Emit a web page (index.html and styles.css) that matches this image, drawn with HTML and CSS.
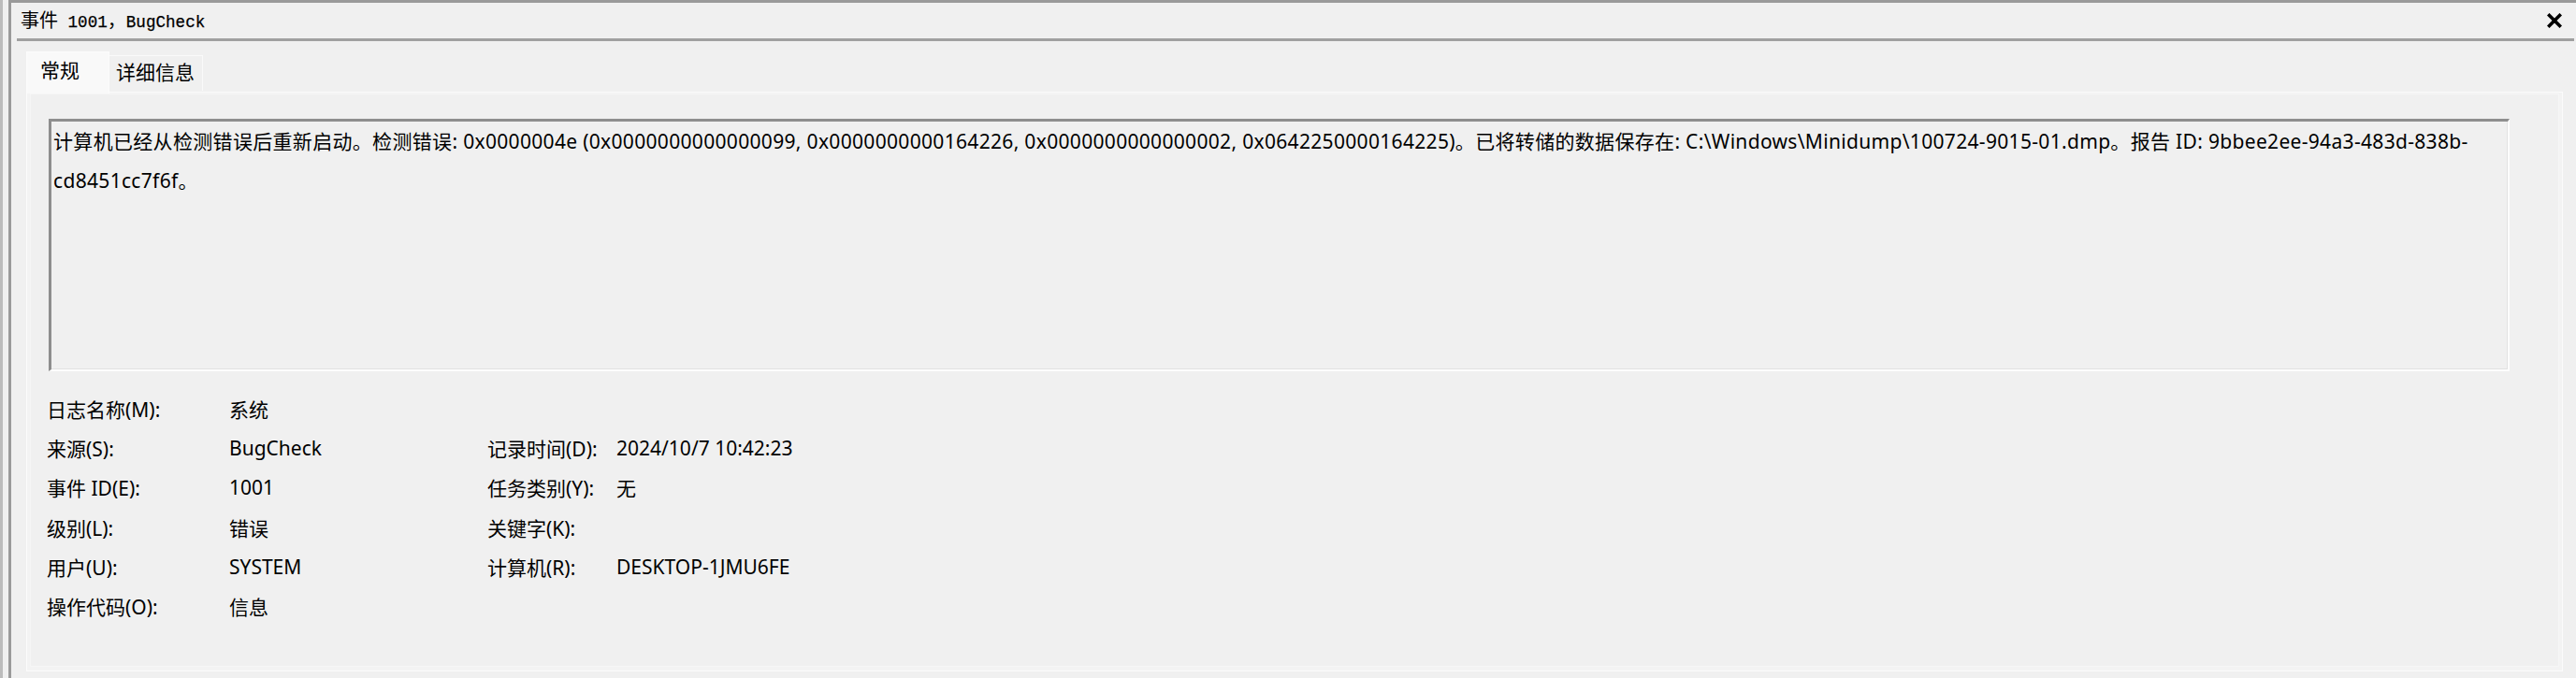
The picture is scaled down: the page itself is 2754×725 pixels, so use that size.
FILE: index.html
```html
<!DOCTYPE html>
<html lang="zh-CN">
<head>
<meta charset="utf-8">
<title>事件 1001，BugCheck</title>
<link rel="stylesheet" href="styles.css">
</head>
<body>
<div class="page">
  <div class="window">
    <div class="titlebar">
      <div class="title"><span class="cjk">事件</span> 1001<span class="cjk">，</span>BugCheck</div>
      <svg class="close" width="16" height="16" viewBox="0 0 16 16" aria-hidden="true">
        <path d="M2.5 2.5 L13.5 13.5 M13.5 2.5 L2.5 13.5" stroke="#000" stroke-width="3.6" stroke-linecap="square" fill="none"/>
      </svg>
    </div>
    <div class="tabs">
      <div class="tab active">常规</div>
      <div class="tab">详细信息</div>
    </div>
    <div class="panel">
      <div class="panel-inner">
        <div class="desc">
          <div class="line">计算机已经从检测错误后重新启动。检测错误: 0x0000004e (0x0000000000000099, 0x0000000000164226, 0x0000000000000002, 0x0642250000164225)。已将转储的数据保存在: C:\Windows\Minidump\100724-9015-01.dmp。报告 ID: 9bbee2ee-94a3-483d-838b-</div>
          <div class="line">cd8451cc7f6f。</div>
        </div>
        <div class="details">
          <div class="lbl">日志名称(M):</div><div class="val">系统</div><div class="lbl2"></div><div class="val2"></div>
          <div class="lbl">来源(S):</div><div class="val">BugCheck</div><div class="lbl2">记录时间(D):</div><div class="val2">2024/10/7 10:42:23</div>
          <div class="lbl">事件 ID(E):</div><div class="val">1001</div><div class="lbl2">任务类别(Y):</div><div class="val2">无</div>
          <div class="lbl">级别(L):</div><div class="val">错误</div><div class="lbl2">关键字(K):</div><div class="val2"></div>
          <div class="lbl">用户(U):</div><div class="val">SYSTEM</div><div class="lbl2">计算机(R):</div><div class="val2">DESKTOP-1JMU6FE</div>
          <div class="lbl">操作代码(O):</div><div class="val">信息</div><div class="lbl2"></div><div class="val2"></div>
        </div>
      </div>
    </div>
  </div>
</div>
</body>
</html>
```
FILE: styles.css
```css
* { box-sizing: border-box; }
html, body { margin: 0; padding: 0; }
body {
  width: 2754px;
  height: 725px;
  overflow: hidden;
  background: #f0f0f0;
  color: #000;
  font-family: "Noto Sans", "Noto Sans CJK SC", sans-serif;
  font-size: 21px;
}
.page {
  height: 725px;
  border-left: 3px solid #bcbcbc;
  padding-left: 6px;
}
.window {
  height: 725px;
  border-left: 3px solid #9a9a9a;
  border-top: 3px solid #9a9a9a;
}
.titlebar {
  height: 41px;
  margin-left: 6px;
  margin-right: 2px;
  border-bottom: 3px solid #a0a0a0;
  display: flex;
  align-items: center;
  justify-content: space-between;
  padding-left: 4px;
  padding-right: 13px;
}
.title {
  font-family: "Liberation Mono", "Noto Sans CJK SC", monospace;
  font-size: 17.6px;
  white-space: nowrap;
  line-height: 24px;
  -webkit-text-stroke: 0.25px #000;
}
.title .cjk {
  font-family: "Noto Sans CJK SC", sans-serif;
  font-size: 20px;
  -webkit-text-stroke: 0;
}
.close { display: block; }
.tabs {
  display: flex;
  align-items: flex-end;
  margin-left: 16px;
  margin-top: 11px;
  height: 43px;
  position: relative;
  z-index: 1;
}
.tab {
  white-space: nowrap;
  line-height: 28px;
  font-size: 21px;
}
.tab.active {
  width: 89px;
  height: 45px;
  margin-bottom: -2px;
  padding: 5px 0 0 14px;
  background: #f9f9f9;
  border: 1px solid #fcfcfc;
  border-bottom: none;
}
.tab:not(.active) {
  width: 100px;
  height: 38px;
  margin-bottom: 1px;
  padding: 3px 0 0 7px;
  border: 1px solid #fafafa;
  border-left: none;
  border-bottom: none;
}
.panel {
  margin-left: 16px;
  margin-right: 14px;
  height: 620px;
  border: 1px solid #fbfbfb;
  padding: 1px 3px 4px 3px;
  background: #f3f3f3;
}
.panel-inner {
  height: 100%;
  border: 1px solid #f6f6f6;
  background: #f0f0f0;
}
.desc {
  margin: 26px 52px 0 19px;
  height: 270px;
  border-top: 3px solid #8e8e8e;
  border-left: 3px solid #8e8e8e;
  border-right: 2px solid #fdfdfd;
  border-bottom: 2px solid #fdfdfd;
  box-shadow: inset -1px -1px 0 #e2e2e2;
  padding-left: 2px;
  background: #f0f0f0;
}
.line {
  white-space: nowrap;
  line-height: 42px;
  letter-spacing: 0.32px;
}
.details {
  margin: 19px 0 0 17px;
  display: grid;
  grid-template-columns: 195px 276px 138px 400px;
  grid-auto-rows: 42.2px;
  align-items: center;
  white-space: nowrap;
}
```
